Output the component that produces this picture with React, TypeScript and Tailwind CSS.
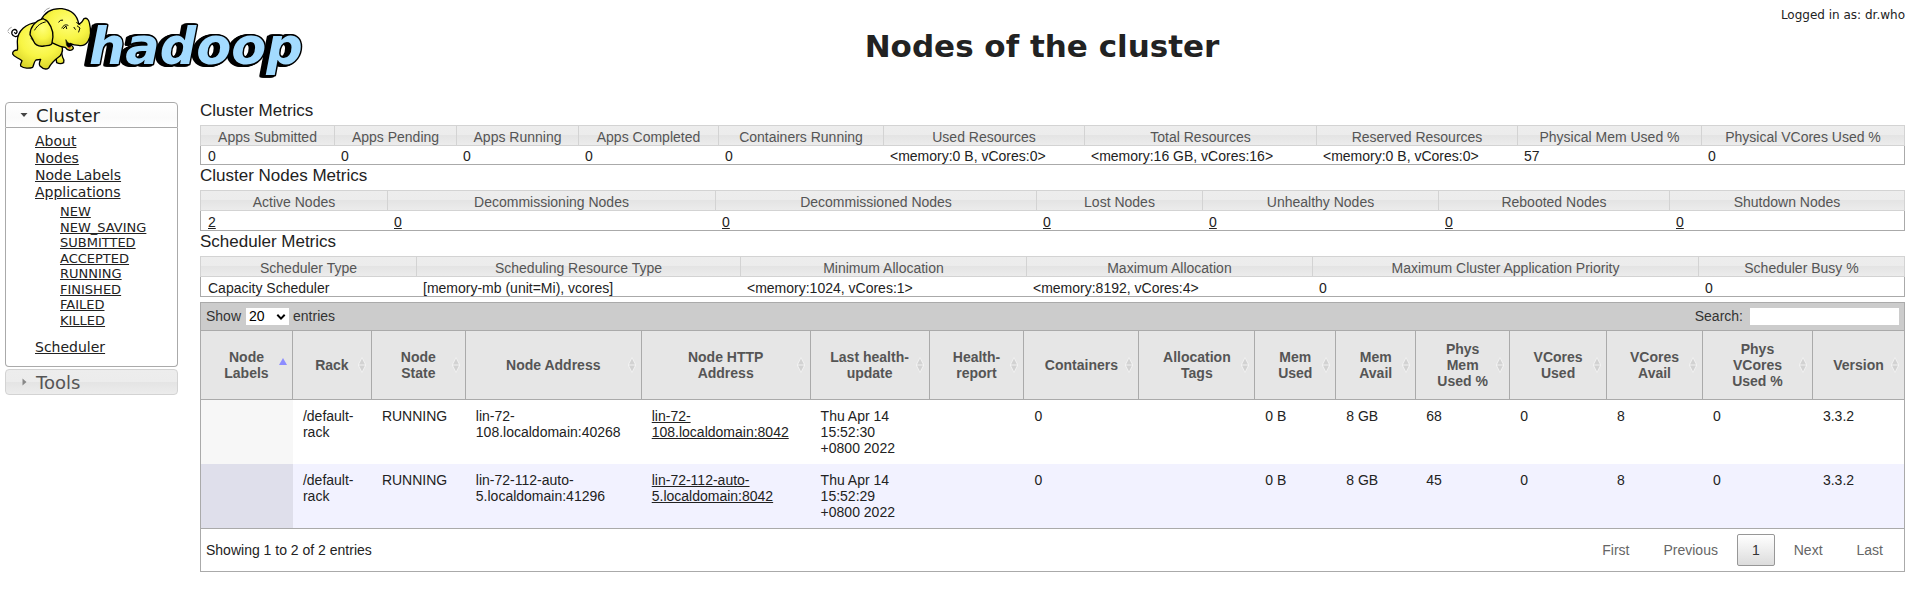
import React from "react";

type Metric = { label: string; value: string; width: number; link?: boolean };

const clusterMetrics: Metric[] = [
  { label: "Apps Submitted", value: "0", width: 134 },
  { label: "Apps Pending", value: "0", width: 122 },
  { label: "Apps Running", value: "0", width: 122 },
  { label: "Apps Completed", value: "0", width: 140 },
  { label: "Containers Running", value: "0", width: 165 },
  { label: "Used Resources", value: "<memory:0 B, vCores:0>", width: 201 },
  { label: "Total Resources", value: "<memory:16 GB, vCores:16>", width: 232 },
  { label: "Reserved Resources", value: "<memory:0 B, vCores:0>", width: 201 },
  { label: "Physical Mem Used %", value: "57", width: 184 },
  { label: "Physical VCores Used %", value: "0", width: 204 },
];

const nodeMetrics: Metric[] = [
  { label: "Active Nodes", value: "2", width: 187, link: true },
  { label: "Decommissioning Nodes", value: "0", width: 328, link: true },
  { label: "Decommissioned Nodes", value: "0", width: 321, link: true },
  { label: "Lost Nodes", value: "0", width: 166, link: true },
  { label: "Unhealthy Nodes", value: "0", width: 236, link: true },
  { label: "Rebooted Nodes", value: "0", width: 231, link: true },
  { label: "Shutdown Nodes", value: "0", width: 236, link: true },
];

const schedulerMetrics: Metric[] = [
  { label: "Scheduler Type", value: "Capacity Scheduler", width: 216 },
  { label: "Scheduling Resource Type", value: "[memory-mb (unit=Mi), vcores]", width: 324 },
  { label: "Minimum Allocation", value: "<memory:1024, vCores:1>", width: 286 },
  { label: "Maximum Allocation", value: "<memory:8192, vCores:4>", width: 286 },
  { label: "Maximum Cluster Application Priority", value: "0", width: 386 },
  { label: "Scheduler Busy %", value: "0", width: 207 },
];

const nodeColumns: { lines: string[]; width: number }[] = [
  { lines: ["Node", "Labels"], width: 92 },
  { lines: ["Rack"], width: 79 },
  { lines: ["Node", "State"], width: 94 },
  { lines: ["Node Address"], width: 176 },
  { lines: ["Node HTTP", "Address"], width: 169 },
  { lines: ["Last health-", "update"], width: 119 },
  { lines: ["Health-", "report"], width: 95 },
  { lines: ["Containers"], width: 115 },
  { lines: ["Allocation", "Tags"], width: 116 },
  { lines: ["Mem", "Used"], width: 81 },
  { lines: ["Mem", "Avail"], width: 80 },
  { lines: ["Phys", "Mem", "Used %"], width: 94 },
  { lines: ["VCores", "Used"], width: 97 },
  { lines: ["VCores", "Avail"], width: 96 },
  { lines: ["Phys", "VCores", "Used %"], width: 110 },
  { lines: ["Version"], width: 91 },
];

const nodeRows: string[][] = [
  ["", "/default-\nrack", "RUNNING", "lin-72-\n108.localdomain:40268", "lin-72-\n108.localdomain:8042", "Thu Apr 14\n15:52:30\n+0800 2022", "", "0", "", "0 B", "8 GB", "68", "0", "8", "0", "3.3.2"],
  ["", "/default-\nrack", "RUNNING", "lin-72-112-auto-\n5.localdomain:41296", "lin-72-112-auto-\n5.localdomain:8042", "Thu Apr 14\n15:52:29\n+0800 2022", "", "0", "", "0 B", "8 GB", "45", "0", "8", "0", "3.3.2"],
];

const appStates = ["NEW", "NEW_SAVING", "SUBMITTED", "ACCEPTED", "RUNNING", "FINISHED", "FAILED", "KILLED"];

function Columns({ widths }: { widths: number[] }) {
  const total = widths.reduce((a, b) => a + b, 0);
  return (
    <colgroup>
      {widths.map((w, i) => (
        <col key={i} style={{ width: `${(w / total) * 100}%` }} />
      ))}
    </colgroup>
  );
}

function Logo() {
  return (
    <svg className="block" width="320" height="90" viewBox="0 0 320 90" role="img" aria-label="Hadoop">
      <text
        x="89"
        y="64"
        fontFamily="'DejaVu Sans', sans-serif"
        fontWeight="bold"
        fontStyle="italic"
        fontSize="51"
        fill="#a3dbff"
        stroke="#000"
        strokeWidth="3"
        strokeLinejoin="round"
        paintOrder="stroke"
        className="[filter:drop-shadow(-1px_0_0_#000)_drop-shadow(-2px_0_0_#000)_drop-shadow(-2px_1px_0_#000)]"
      >
        hadoop
      </text>
      <defs>
        <radialGradient id="skin" cx="0.55" cy="0.35" r="0.7">
          <stop offset="0" stopColor="#ffff7a" />
          <stop offset="0.55" stopColor="#f8f545" />
          <stop offset="1" stopColor="#d6d026" />
        </radialGradient>
      </defs>
      <g transform="scale(0.3333)" fill="url(#skin)" stroke="#000" strokeWidth="4" strokeLinejoin="round" strokeLinecap="round">
        <path d="M58 104 C52 112 40 112 36 102 C33 92 44 84 50 92 C54 98 46 104 44 98" fill="none" />
        <path d="M166 160 L170 188 Q182 194 191 188 Q194 180 188 172 L180 140 Z" />
        <path d="M112 68 C78 70 52 92 52 124 C52 138 54 146 52 150 C44 150 37 154 38 162 C42 172 54 172 66 182 C64 190 60 192 62 198 C72 206 88 206 98 202 C102 194 102 184 108 180 L122 178 C118 186 116 192 120 198 C128 206 138 210 146 204 C152 192 166 178 180 168 C190 156 190 146 184 132 L150 80 Z" />
        <path d="M122 62 C134 36 158 24 186 26 C214 30 232 46 236 72 C244 72 248 62 252 56 C260 52 266 58 268 68 C274 92 274 110 264 124 C256 136 246 138 236 136 C226 136 218 134 210 130 C214 138 222 140 220 146 C214 154 202 152 196 142 C180 142 168 134 156 128 L134 90 Z" />
        <path d="M130 56 C104 62 90 84 90 104 C94 112 98 116 100 122 C106 136 120 140 132 138 C144 136 156 138 156 128 C162 106 158 84 144 66 C138 58 134 60 130 56 Z" />
        <path d="M198 120 C202 130 210 130 214 134 C212 144 204 144 200 136 Z" fill="#000" strokeWidth="2" />
        <path d="M202 142 L212 140 L210 146 Z" fill="#c33" stroke="none" />
        <path d="M186 84 C190 76 196 72 204 76 M190 86 L198 78 L200 86 M176 66 Q182 58 188 60 M222 82 L226 88 M232 78 L240 84 L236 96 M104 90 C112 76 124 68 136 66 M94 116 L100 122 M230 68 L240 74" fill="none" strokeWidth="3" />
        <path d="M132 36 Q138 26 148 24 M24 92 Q26 84 34 82 M28 100 L24 96" fill="none" stroke="#777" strokeWidth="2" />
      </g>
    </svg>
  );
}

function MetricsTable({ title, metrics, rowClass }: { title: string; metrics: Metric[]; rowClass: string }) {
  return (
    <section>
      <h2 className="pt-[1px] pb-[4px] text-[17px] leading-[20px] text-[#222]">{title}</h2>
      <table aria-label={title} className="w-full table-fixed border-separate border-spacing-0">
        <Columns widths={metrics.map((m) => m.width)} />
        <thead>
          <tr className="h-[21px]">
            {metrics.map((m) => (
              <th
                key={m.label}
                className="whitespace-nowrap border-y border-l border-[#d3d3d3] bg-[linear-gradient(#ededed_0%,#ececec_50%,#e4e4e4_50%,#ececec_100%)] p-0 pt-[3px] text-center font-normal leading-[16px] text-[#555] last:border-r"
              >
                {m.label}
              </th>
            ))}
          </tr>
        </thead>
        <tbody>
          <tr className={rowClass}>
            {metrics.map((m) => (
              <td
                key={m.label}
                className="whitespace-nowrap border-b border-[#aaa] p-0 pl-[7px] align-bottom leading-[15px] text-[#222] first:border-l last:border-r"
              >
                {m.link ? <a href="#nodes" className="underline">{m.value}</a> : m.value}
              </td>
            ))}
          </tr>
        </tbody>
      </table>
    </section>
  );
}

function SortIcon({ active }: { active: boolean }) {
  return (
    <svg className="shrink-0" width="10" height="18" viewBox="0 0 10 18" aria-hidden="true">
      {active ? (
        <path d="M5 2 L9 9 H1 Z" fill="#8c8cff" />
      ) : (
        <>
          <path d="M5 .8 L9 8.5 V9.5 L5 17.2 L1 9.5 V8.5 Z" fill="#f2f2f2" />
          <path d="M5 2.4 L8 8.4 H2 Z M5 15.6 L8 9.6 H2 Z" fill="#d2d2d2" />
        </>
      )}
    </svg>
  );
}

function Sidebar() {
  return (
    <nav className="mt-[2px] w-[173px] shrink-0 font-['DejaVu_Sans',sans-serif]">
      <h3>
        <button className="flex h-[26px] w-full items-center rounded-t-[4px] border border-[#aaa] bg-[linear-gradient(#fff,#fafafa_60%,#fff)] pl-[14px] text-left text-[18px] text-[#222]">
          <svg className="mr-[8px]" width="8" height="8" viewBox="0 0 8 8" aria-hidden="true">
            <path d="M.5 2 H7.5 L4 6 Z" fill="#444" />
          </svg>
          Cluster
        </button>
      </h3>
      <ul className="rounded-b-[4px] border border-t-0 border-[#aaa] pt-[5px] pb-[10px] pl-[29px] text-[14px] leading-[17px] text-[#222]">
        <li><a href="#about" className="underline">About</a></li>
        <li><a href="#nodes" className="underline">Nodes</a></li>
        <li><a href="#labels" className="underline">Node Labels</a></li>
        <li>
          <a href="#apps" className="underline">Applications</a>
          <ul className="mt-[3px] mb-[11px] grid h-[124px] pl-[25px] text-[13px] leading-[15px]">
            {appStates.map((s) => (
              <li key={s}><a href="#apps" className="underline">{s}</a></li>
            ))}
          </ul>
        </li>
        <li><a href="#scheduler" className="underline">Scheduler</a></li>
      </ul>
      <h3 className="mt-[2px]">
        <button className="flex h-[26px] w-full items-center rounded-[4px] border border-[#d3d3d3] bg-[linear-gradient(#ededed_0%,#ececec_50%,#e4e4e4_50%,#ececec_100%)] pl-[14px] text-left text-[18px] text-[#555]">
          <svg className="mr-[8px]" width="8" height="8" viewBox="0 0 8 8" aria-hidden="true">
            <path d="M2.5 .5 V7.5 L6.5 4 Z" fill="#888" />
          </svg>
          Tools
        </button>
      </h3>
    </nav>
  );
}

function NodesTable() {
  return (
    <section className="mt-[5px] border border-[#aaa] text-[#222]">
      <div className="flex h-[27px] items-center justify-between bg-[#ccc] pr-[5px] pl-[5px] text-[#333]">
        <label className="flex items-center">
          Show
          <span className="ml-[5px] mr-[4px] grid items-center">
            <select defaultValue="20" className="col-start-1 row-start-1 h-[17px] w-[43px] appearance-none bg-white pl-[3px] text-[14px] leading-[17px] text-black">
              <option>20</option>
              <option>40</option>
              <option>60</option>
            </select>
            <svg className="pointer-events-none col-start-1 row-start-1 mr-[3px] justify-self-end" width="10" height="8" viewBox="0 0 10 8" aria-hidden="true">
              <path d="M1.3 1.8 L5 5.6 L8.7 1.8" fill="none" stroke="#000" strokeWidth="2" />
            </svg>
          </span>
          entries
        </label>
        <label className="flex items-center gap-[7px]">
          Search:
          <input type="text" className="h-[17px] w-[149px] bg-white px-[2px] outline-none" />
        </label>
      </div>
      <table className="w-full table-fixed border-separate border-spacing-0">
        <Columns widths={nodeColumns.map((c) => c.width)} />
        <thead>
          <tr className="h-[70px]">
            {nodeColumns.map((c, i) => (
              <th key={i} className="border-y border-r border-[#aaa] bg-[#e6e6e6] p-0 leading-[16px] text-[#555] last:border-r-0">
                <button className="flex w-full items-center px-[4px] font-bold">
                  <span className="w-[10px] shrink-0" />
                  <span className="flex min-w-0 flex-1 flex-col items-center whitespace-nowrap">
                    {c.lines.map((l) => (
                      <span key={l}>{l}</span>
                    ))}
                  </span>
                  <SortIcon active={i === 0} />
                </button>
              </th>
            ))}
          </tr>
        </thead>
        <tbody>
          {nodeRows.map((row, r) => (
            <tr key={r} className={r % 2 ? "h-[64px] bg-[#f2f2ff]" : "h-[64px] bg-white"}>
              {row.map((cell, i) => (
                <td
                  key={i}
                  className={
                    i > 0
                      ? "whitespace-pre p-0 py-[8px] pl-[10px] align-top leading-[16px]"
                      : r % 2
                        ? "bg-[#dfdfeb] p-0"
                        : "bg-[#f7f7f7] p-0"
                  }
                >
                  {i === 4 ? <a href="#node" className="underline">{cell}</a> : cell}
                </td>
              ))}
            </tr>
          ))}
        </tbody>
      </table>
      <div className="flex h-[43px] items-center justify-between border-t border-[#aaa] pr-[6px] pl-[5px]">
        <p>Showing 1 to 2 of 2 entries</p>
        <div className="flex gap-[4px] text-[#666]">
          <button className="h-[32px] border border-transparent px-[14px]">First</button>
          <button className="h-[32px] border border-transparent px-[14px]">Previous</button>
          <button className="h-[32px] rounded-[2px] border border-[#979797] bg-[linear-gradient(#fff,#dcdcdc)] px-[14px] text-[#333]">1</button>
          <button className="h-[32px] border border-transparent px-[14px]">Next</button>
          <button className="h-[32px] border border-transparent px-[14px]">Last</button>
        </div>
      </div>
    </section>
  );
}

export default function App() {
  return (
    <div className="bg-white pb-[19px] font-['Liberation_Sans',Arial,sans-serif] text-[14px]">
      <header className="flex h-[100px] font-['DejaVu_Sans',sans-serif] text-[#222]">
        <div className="w-[320px] shrink-0">
          <Logo />
        </div>
        <h1 className="flex-1 pt-[26px] text-center text-[31px] leading-[40px] font-bold">Nodes of the cluster</h1>
        <p className="w-[155px] shrink-0 pt-[7px] pr-[14px] text-right text-[12px] leading-[16px]">Logged in as: dr.who</p>
      </header>
      <div className="flex gap-[22px] pr-[14px] pl-[5px]">
        <Sidebar />
        <main className="min-w-0 flex-1">
          <MetricsTable title="Cluster Metrics" metrics={clusterMetrics} rowClass="h-[19px]" />
          <MetricsTable title="Cluster Nodes Metrics" metrics={nodeMetrics} rowClass="h-[20px]" />
          <MetricsTable title="Scheduler Metrics" metrics={schedulerMetrics} rowClass="h-[20px]" />
          <NodesTable />
        </main>
      </div>
    </div>
  );
}
